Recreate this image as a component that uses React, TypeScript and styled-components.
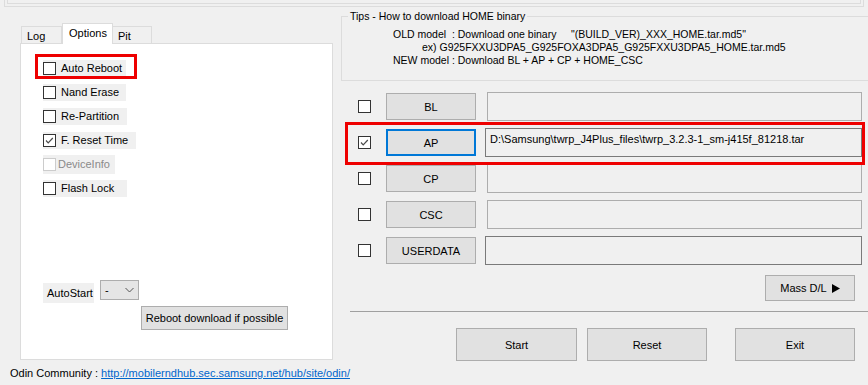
import React from "react";
import styled, { createGlobalStyle } from "styled-components";

const GlobalStyle = createGlobalStyle`
  html, body {
    margin: 0;
    padding: 0;
    background: #f0f0f0;
  }
  body {
    font-family: "Liberation Sans", Arial, sans-serif;
    font-size: 11px;
    color: #000;
  }
  * {
    box-sizing: border-box;
  }
`;

const Window = styled.div`
  width: 868px;
  height: 385px;
  overflow: hidden;
  background: #f0f0f0;
  display: flex;
  flex-direction: column;
`;

const TopFrame = styled.div`
  height: 7px;
  margin: 0 4px 0 4px;
  border: 1px solid #dcdcdc;
  border-top: none;
`;

const TopFrameInner = styled.div`
  height: 4px;
  margin: 0 2px;
  border: 1px solid #dcdcdc;
  border-top: none;
`;

const Body = styled.div`
  display: flex;
  align-items: flex-start;
`;

/* ---------- left: tab control ---------- */

const LeftColumn = styled.div`
  margin: 16px 0 0 20px;
  width: 313px;
  display: flex;
  flex-direction: column;
`;

const TabStrip = styled.div`
  display: flex;
  align-items: flex-end;
  height: 21px;
  padding-left: 1px;
  margin-bottom: -1px;
  position: relative;
  z-index: 1;
`;

const Tab = styled.div<{ $active?: boolean; $width: number }>`
  width: ${(p) => p.$width}px;
  height: ${(p) => (p.$active ? 21 : 18)}px;
  line-height: ${(p) => (p.$active ? 19 : 18)}px;
  padding-left: ${(p) => (p.$active ? 6 : 5)}px;
  font-size: 11px;
  border: 1px solid #dcdcdc;
  border-bottom: ${(p) => (p.$active ? "none" : "1px solid #dcdcdc")};
  border-left: ${(p) => (p.$active ? "1px solid #dcdcdc" : "none")};
  background: ${(p) => (p.$active ? "#ffffff" : "#f0f0f0")};
  &:first-child {
    border-left: 1px solid #dcdcdc;
  }
`;

const Pane = styled.div`
  height: 317px;
  background: #ffffff;
  border: 1px solid #dcdcdc;
  padding: 12px 0 0 22px;
  display: flex;
  flex-direction: column;
`;

const OptionList = styled.div`
  display: flex;
  flex-direction: column;
`;

const OptionRow = styled.div`
  height: 24px;
  display: flex;
  align-items: center;
  position: relative;
`;

const CheckLabel = styled.div<{ $width: number; $tall?: boolean; $disabled?: boolean }>`
  display: inline-flex;
  align-items: center;
  gap: ${(p) => (p.$disabled ? 2 : 5)}px;
  width: ${(p) => p.$width}px;
  height: ${(p) => (p.$tall ? 19 : 17)}px;
  background: #f0f0f0;
  font-size: 11px;
  color: ${(p) => (p.$disabled ? "#8a8a8a" : "#000")};
  white-space: nowrap;
`;

const Box = styled.span<{ $disabled?: boolean }>`
  width: 13px;
  height: 13px;
  flex: none;
  display: inline-flex;
  border: 1px solid ${(p) => (p.$disabled ? "#cccccc" : "#333333")};
  background: #ffffff;
  svg {
    display: block;
  }
`;

const Highlight = styled.div<{ $left: number; $top: number; $w: number; $h: number }>`
  position: absolute;
  left: ${(p) => p.$left}px;
  top: ${(p) => p.$top}px;
  width: ${(p) => p.$w}px;
  height: ${(p) => p.$h}px;
  border: 3px solid #ee0000;
  pointer-events: none;
  z-index: 2;
`;

const AutoStartRow = styled.div`
  margin-top: 80px;
  display: flex;
  align-items: flex-start;
  gap: 6px;
`;

const AutoStartLabel = styled.div`
  margin-top: 3px;
  width: 51px;
  height: 20px;
  line-height: 20px;
  padding-left: 4px;
  background: #f0f0f0;
  font-size: 11px;
  white-space: nowrap;
`;

const Combo = styled.div`
  width: 39px;
  height: 20px;
  border: 1px solid #adadad;
  background: #e5e5e5;
  display: flex;
  align-items: center;
  justify-content: space-between;
  padding: 0 4px 0 4px;
  font-size: 11px;
`;

const WinButton = styled.button<{ $w: number; $h: number; $focused?: boolean }>`
  width: ${(p) => p.$w}px;
  height: ${(p) => p.$h}px;
  flex: none;
  padding: 0;
  font-family: inherit;
  font-size: 11px;
  color: #000;
  background: #e1e1e1;
  border: ${(p) => (p.$focused ? "2px solid #0078d7" : "1px solid #adadad")};
  display: inline-flex;
  align-items: center;
  justify-content: center;
  gap: 5px;
  white-space: nowrap;
`;

const RebootButton = styled(WinButton)`
  margin: 3px 0 0 98px;
`;

/* ---------- right column ---------- */

const RightColumn = styled.div`
  flex: 1;
  min-width: 0;
  margin-left: 8px;
  display: flex;
  flex-direction: column;
`;

const TipsBox = styled.fieldset`
  margin: 3px -20px 0 0;
  padding: 0 0 0 51px;
  height: 71px;
  border: 1px solid #dcdcdc;
  min-width: 0;
`;

const TipsLegend = styled.legend`
  margin-left: -45px;
  padding: 0 2px;
  line-height: 13px;
  font-size: 10.5px;
`;

const TipsText = styled.div`
  padding-top: 5px;
  line-height: 13px;
  font-size: 10.5px;
  white-space: pre;
`;

const TipsLine = styled.div<{ $indent?: number }>`
  padding-left: ${(p) => p.$indent ?? 0}px;
`;

const FileRows = styled.div`
  margin-top: 11px;
  display: flex;
  flex-direction: column;
  gap: 7px;
`;

const FileRow = styled.div`
  height: 29px;
  display: flex;
  align-items: center;
  position: relative;
`;

const CheckCell = styled.div`
  width: 45px;
  padding-left: 17px;
  display: flex;
`;

const PathField = styled.div<{ $dark?: boolean }>`
  height: 29px;
  margin-left: ${(p) => (p.$dark ? 9 : 11)}px;
  width: ${(p) => (p.$dark ? 377 : 375)}px;
  border: 1px solid ${(p) => (p.$dark ? "#7a7a7a" : "#adadad")};
  background: #f0f0f0;
  padding: 4px 0 0 4px;
  font-size: 11px;
  white-space: nowrap;
`;

const MassRow = styled.div`
  margin-top: 10px;
  padding-right: 13px;
  display: flex;
  justify-content: flex-end;
`;

const Separator = styled.div`
  margin: 10px 0 0 9px;
  height: 1px;
  background: #a0a0a0;
`;

const ActionRow = styled.div`
  margin-top: 16px;
  padding-left: 115px;
  display: flex;
  gap: 10px;
  button:last-child {
    margin-left: 18px;
  }
`;

const Footer = styled.div`
  margin-top: 5px;
  padding-left: 10px;
  line-height: 14px;
  font-size: 11px;
  white-space: nowrap;
`;

const CommunityLink = styled.a`
  color: #0066cc;
  text-decoration: underline;
`;

/* ---------- pieces ---------- */

const CheckBox: React.FC<{ checked?: boolean; disabled?: boolean }> = ({
  checked,
  disabled,
}) => (
  <Box $disabled={disabled}>
    {checked && (
      <svg width="11" height="11" viewBox="0 0 11 11">
        <polyline
          points="2,5.5 4.2,7.8 8.8,3"
          fill="none"
          stroke="#4a4a4a"
          strokeWidth="1.2"
        />
      </svg>
    )}
  </Box>
);

const options = [
  { label: "Auto Reboot", width: 83 },
  { label: "Nand Erase", width: 83 },
  { label: "Re-Partition", width: 84 },
  { label: "F. Reset Time", width: 93, checked: true },
  { label: "DeviceInfo", width: 72, disabled: true },
  { label: "Flash Lock", width: 84 },
];

const files = [
  { name: "BL" },
  {
    name: "AP",
    checked: true,
    path: "D:\\Samsung\\twrp_J4Plus_files\\twrp_3.2.3-1_sm-j415f_81218.tar",
  },
  { name: "CP" },
  { name: "CSC" },
  { name: "USERDATA" },
];

const App: React.FC = () => {
  return (
    <>
      <GlobalStyle />
      <Window>
        <TopFrame>
          <TopFrameInner />
        </TopFrame>
        <Body>
          <LeftColumn>
            <TabStrip>
              <Tab $width={41}>Log</Tab>
              <Tab $width={51} $active>
                Options
              </Tab>
              <Tab $width={39}>Pit</Tab>
            </TabStrip>
            <Pane>
              <OptionList>
                {options.map((o, i) => (
                  <OptionRow key={o.label}>
                    <CheckLabel
                      $width={o.width}
                      $tall={o.disabled}
                      $disabled={o.disabled}
                    >
                      <CheckBox checked={o.checked} disabled={o.disabled} />
                      {o.label}
                    </CheckLabel>
                    {i === 0 && <Highlight $left={-8} $top={-2} $w={102} $h={25} />}
                  </OptionRow>
                ))}
              </OptionList>
              <AutoStartRow>
                <AutoStartLabel>AutoStart</AutoStartLabel>
                <Combo>
                  <span>-</span>
                  <svg width="9" height="6" viewBox="0 0 9 6">
                    <polyline
                      points="0.5,1 4.5,5 8.5,1"
                      fill="none"
                      stroke="#555"
                      strokeWidth="1"
                    />
                  </svg>
                </Combo>
              </AutoStartRow>
              <RebootButton $w={147} $h={24}>
                Reboot download if possible
              </RebootButton>
            </Pane>
          </LeftColumn>

          <RightColumn>
            <TipsBox>
              <TipsLegend>Tips - How to download HOME binary</TipsLegend>
              <TipsText>
                <TipsLine>
                  {'OLD model  : Download one binary     "(BUILD_VER)_XXX_HOME.tar.md5"'}
                </TipsLine>
                <TipsLine $indent={29}>
                  ex) G925FXXU3DPA5_G925FOXA3DPA5_G925FXXU3DPA5_HOME.tar.md5
                </TipsLine>
                <TipsLine>NEW model : Download BL + AP + CP + HOME_CSC</TipsLine>
              </TipsText>
            </TipsBox>

            <FileRows>
              {files.map((f) => (
                <FileRow key={f.name}>
                  <CheckCell>
                    <CheckBox checked={f.checked} />
                  </CheckCell>
                  <WinButton $w={90} $h={27} $focused={f.name === "AP"}>
                    {f.name}
                  </WinButton>
                  <PathField $dark={f.name === "AP" || f.name === "USERDATA"}>
                    {f.path}
                  </PathField>
                  {f.name === "AP" && (
                    <Highlight $left={4} $top={-6} $w={520} $h={43} />
                  )}
                </FileRow>
              ))}
            </FileRows>

            <MassRow>
              <WinButton $w={90} $h={26}>
                Mass D/L
                <svg width="8" height="9" viewBox="0 0 8 9">
                  <polygon points="0,0 8,4.5 0,9" fill="#000" />
                </svg>
              </WinButton>
            </MassRow>

            <Separator />

            <ActionRow>
              <WinButton $w={121} $h={33}>
                Start
              </WinButton>
              <WinButton $w={120} $h={33}>
                Reset
              </WinButton>
              <WinButton $w={120} $h={33}>
                Exit
              </WinButton>
            </ActionRow>
          </RightColumn>
        </Body>
        <Footer>
          Odin Community :{" "}
          <CommunityLink href="#">
            http://mobilerndhub.sec.samsung.net/hub/site/odin/
          </CommunityLink>
        </Footer>
      </Window>
    </>
  );
};

export default App;
